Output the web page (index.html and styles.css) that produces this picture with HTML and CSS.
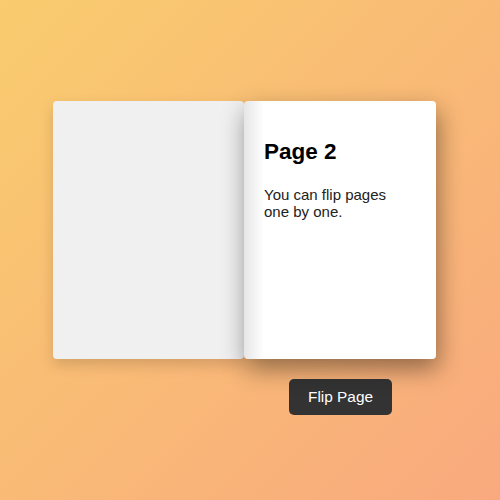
FILE: index.html
```html
<!DOCTYPE html>
<html lang="en">
<head>
    <meta charset="UTF-8">
    <meta name="viewport" content="width=device-width, initial-scale=1.0">
    <title>Flip Book</title>
    <link rel="stylesheet" href="styles.css">
</head>
<body>
    <div class="scene">
        <div class="book">
            <div class="page page-left"></div>
            <div class="page page-right">
                <h2>Page 2</h2>
                <p>You can flip pages one by one.</p>
            </div>
        </div>
        <div class="controls">
            <div></div>
            <div class="controls-cell">
                <button class="flip-btn">Flip Page</button>
            </div>
        </div>
    </div>
</body>
</html>
```

FILE: styles.css
```css
body {
    font-family: Arial, "Liberation Sans", sans-serif;
    background: linear-gradient(135deg, #f9cc6e 0%, #f9a97e 100%);
    height: 100vh;
    margin: 0;
    overflow: hidden;
}
.scene {
    padding: 101px 0 0 53px;
    width: 383px;
}
.book {
    display: flex;
    height: 258px;
}
.page {
    border-radius: 4px;
    box-sizing: border-box;
}
.page-left {
    width: 191px;
    background: #f0f0f0;
    box-shadow: 0 6px 14px rgba(0,0,0,0.15);
}
.page-right {
    width: 192px;
    background: linear-gradient(to right, #e6e6e6 0, #ffffff 20px);
    box-shadow: 2px 10px 24px rgba(0,0,0,0.42);
    padding: 19px 23px 19px 20px;
    color: #222;
    position: relative;
}
.page-right h2 {
    font-size: 22.5px;
    margin: 19px 0 21px;
    color: #000;
}
.page-right p {
    font-size: 15px;
    margin: 0;
}
.controls {
    display: grid;
    grid-template-columns: 192px 191px;
    margin-top: 20px;
}
.controls-cell {
    display: flex;
    justify-content: center;
}
.flip-btn {
    font-family: Arial, "Liberation Sans", sans-serif;
    font-size: 15.4px;
    background: #333;
    color: #fff;
    border: none;
    border-radius: 5px;
    width: 103px;
    height: 36px;
    padding: 0;
    cursor: pointer;
}
```
